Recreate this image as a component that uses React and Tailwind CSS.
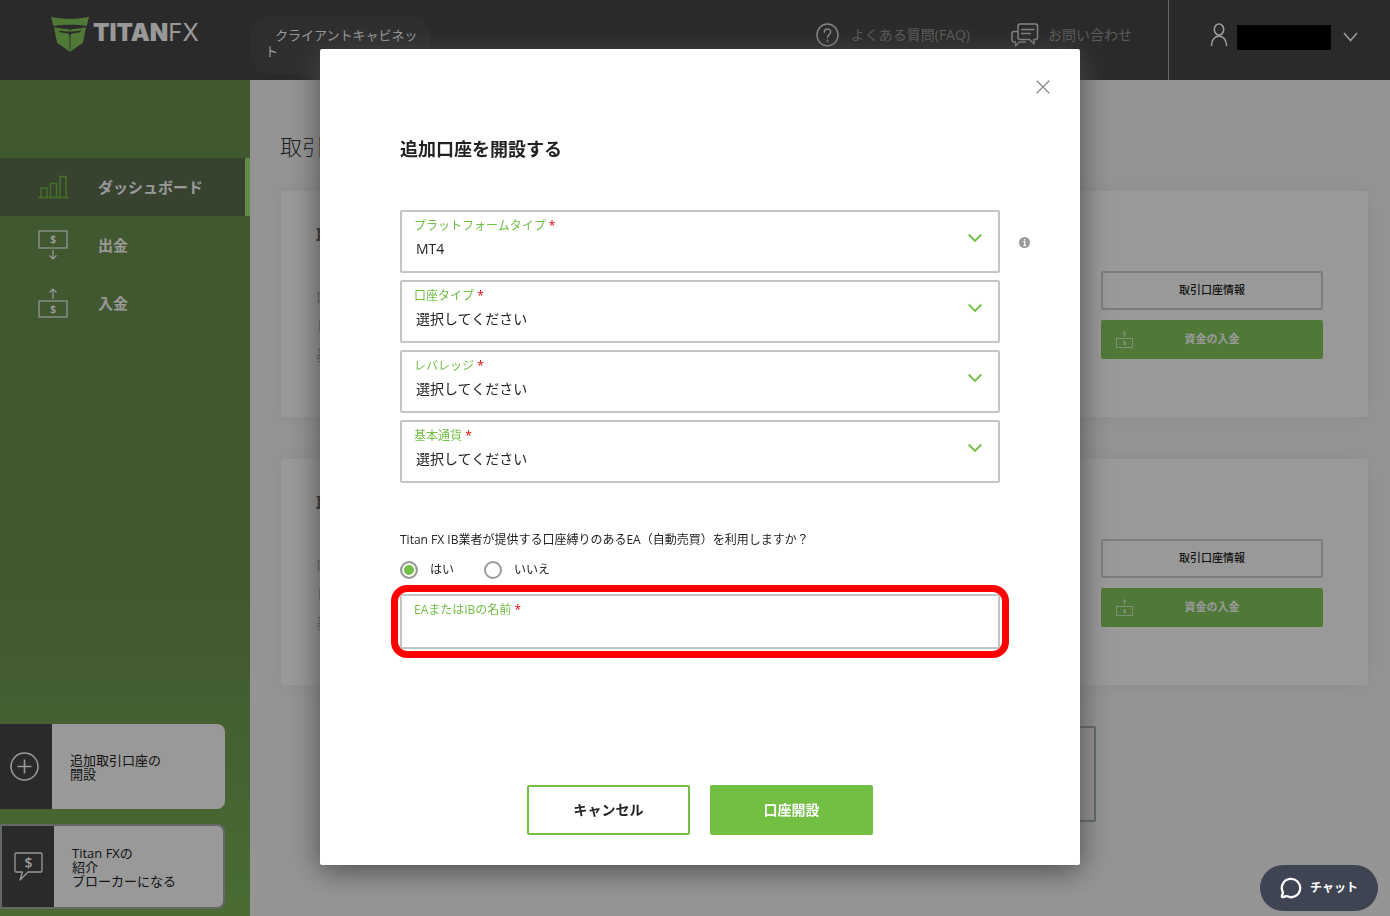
import { useState } from 'react';
import { MessageCircle, X } from 'lucide-react';

const NAV_ITEMS = [
  { label: 'ダッシュボード', icon: ChartIcon, active: true },
  { label: '出金', icon: WithdrawIcon },
  { label: '入金', icon: DepositIcon },
];

const FIELDS = [
  { id: 'platform', label: 'プラットフォームタイプ', options: ['MT4', 'MT5'], info: true },
  { id: 'account', label: '口座タイプ', options: ['選択してください'] },
  { id: 'leverage', label: 'レバレッジ', options: ['選択してください'] },
  { id: 'currency', label: '基本通貨', options: ['選択してください'] },
];

function ShieldLogo() {
  return (
    <svg width="38" height="36" viewBox="0 0 38 36" fill="#85c85d" aria-hidden="true" className="shrink-0">
      <path d="M0 .7c12 2.800 26 2.800 38 0l-2.300 9.300c-10-1.600-23.400-1.600-33.400 0z" />
      <path d="M3 11.300c4 .9 9 1.500 13.500 1.700l2.500 1 2.500-1c4.500-.2 9.500-.8 13.500-1.700L32 26.700 19 35.700 6 26.700z" />
      <path d="M8 14.500c4 .6 7 1 11 1s7-.4 11-1l-1 1.800-8 1.200c-1 0-1.300 1-1.500 3L19.300 34h-.6l-.2-13.500c-.2-2-.5-3-1.500-3l-8-1.200z" fill="#464646" />
    </svg>
  );
}

function ChartIcon() {
  return (
    <svg width="31" height="24" viewBox="0 0 31 24" fill="none" stroke="#72bf44" strokeWidth="1.4">
      <path d="M0 22.500h31M3 22.500V13h6v9.500M12.500 22.500V8.500h6v14M22 22.500V1.500h6v21" />
    </svg>
  );
}

function WithdrawIcon() {
  return (
    <svg width="30" height="30" viewBox="0 0 30 30" fill="none" stroke="#fff" strokeWidth="1.2">
      <rect x="1" y="1" width="28" height="17" />
      <text x="15" y="13" textAnchor="middle" fontSize="10" fill="#fff" stroke="none">$</text>
      <path d="M15 20v9M11.500 25.500L15 29l3.500-3.500" />
    </svg>
  );
}

function DepositIcon({ size = 30 }) {
  return (
    <svg width={size} height={size} viewBox="0 0 30 30" fill="none" stroke="#fff" strokeWidth="1.2">
      <path d="M15 11V1M11.500 4.500L15 1l3.500 3.500" />
      <rect x="1" y="13" width="28" height="16" />
      <text x="15" y="24.500" textAnchor="middle" fontSize="10" fill="#fff" stroke="none">$</text>
    </svg>
  );
}

function QuestionIcon() {
  return (
    <svg width="23" height="24" viewBox="0 0 23 24" fill="none" stroke="#ddd" strokeWidth="1.5">
      <ellipse cx="11.500" cy="12" rx="10.500" ry="11" />
      <path d="M8.300 9.300c0-4.300 6.400-4.300 6.400-.3 0 2.600-3.200 2.600-3.200 5.600M11.500 17v1.500" strokeLinecap="round" />
    </svg>
  );
}

function TalkIcon() {
  return (
    <svg width="30" height="24" viewBox="0 0 30 24" fill="none" stroke="#ddd" strokeWidth="1.5" strokeLinejoin="round">
      <path d="M10 1h15.500q2 0 2 2v11.500q0 2-2 2h-1.500v4.500l-4.500-4.500H10q-2 0-2-2V3q0-2 2-2z" />
      <path d="M8 8.500H4q-2 0-2 2V17q0 2 2 2h1.500v4l4-4H16" />
      <path d="M11.500 6.500H24M11.500 10.500h9" strokeLinecap="round" />
    </svg>
  );
}

function UserIcon() {
  return (
    <svg width="18" height="24" viewBox="0 0 18 24" fill="none" stroke="#fff" strokeWidth="1.6" strokeLinecap="round">
      <ellipse cx="9" cy="6.500" rx="4.700" ry="5.500" />
      <path d="M1.500 22.500c0-12.500 15-12.500 15 0" />
    </svg>
  );
}

function PlusIcon() {
  return (
    <svg width="29" height="29" viewBox="0 0 29 29" fill="none" stroke="#fff" strokeWidth="1.6">
      <circle cx="14.500" cy="14.500" r="13.500" />
      <path d="M14.500 7.500v14M7.500 14.500h14" />
    </svg>
  );
}

function BrokerIcon() {
  return (
    <svg width="29" height="29" viewBox="0 0 29 29" fill="none" stroke="#fff" strokeWidth="1.3" strokeLinejoin="round">
      <path d="M2 1h25q1 0 1 1v17q0 1-1 1H14l-8 8 2.500-8H2q-1 0-1-1V2q0-1 1-1z" />
      <text x="14.500" y="15.500" textAnchor="middle" fontSize="14" fontWeight="600" fill="#fff" stroke="none">$</text>
    </svg>
  );
}

function Header() {
  return (
    <header className="flex h-20 bg-[#464646] text-white">
      <a href="#" aria-label="TITAN FX" className="flex w-[250px] gap-1 pt-4 pl-[51px]">
        <ShieldLogo />
        <span className="flex h-[34px] items-center font-['Inter',sans-serif] text-2xl">
          <span className="font-black">TITAN</span>
          <span>FX</span>
        </span>
      </a>
      <p className="mt-[15px] h-[59px] w-[180px] rounded-[20px] bg-[#4d4d4d] py-3 pl-[15px] indent-[10px] text-[13px] leading-4">
        クライアントキャビネット
      </p>
      <nav className="ml-auto flex h-[70px] items-center gap-10 pr-9 text-sm text-[#999]">
        <a href="#faq" className="flex items-center gap-3">
          <QuestionIcon />
          よくある質問(FAQ)
        </a>
        <a href="#contact" className="flex items-center gap-2">
          <TalkIcon />
          お問い合わせ
        </a>
      </nav>
      <button aria-label="アカウント" className="flex w-[222px] items-start border-l border-[#aaa] pt-[23px] pl-[41px]">
        <UserIcon />
        <span className="mt-0.5 ml-[9px] h-[25px] w-[94px] bg-black" />
        <svg className="mt-[9px] ml-3" width="15" height="10" viewBox="0 0 15 10" fill="none" stroke="#fff" strokeWidth="1.6">
          <path d="M1 1l6.500 7.500L14 1" />
        </svg>
      </button>
    </header>
  );
}

function Sidebar() {
  return (
    <aside className="flex w-[250px] shrink-0 flex-col justify-between bg-linear-to-b from-[#6b9350] from-60% to-[#7db355] pt-[78px] pb-[7px]">
      <nav className="text-[15px] font-bold text-white">
        {NAV_ITEMS.map(({ label, icon: Icon, active }) => (
          <a
            key={label}
            href="#"
            className={
              active
                ? 'flex h-[58px] items-center border-r-[5px] border-[#a0e878] bg-[#5c704e] pl-[38px]'
                : 'flex h-[58px] items-center pl-[38px]'
            }
          >
            <span className="w-[60px]">
              <Icon />
            </span>
            {label}
          </a>
        ))}
      </nav>
      <div className="flex w-[225px] flex-col gap-[15px] text-[13px] leading-[14px] text-[#222]">
        <button className="flex h-[85px] overflow-hidden rounded-r-lg bg-white text-left">
          <span className="flex h-full w-[52px] items-center justify-center bg-[#464646] pr-1">
            <PlusIcon />
          </span>
          <span className="self-center pl-[18px]">
            追加取引口座の
            <br />
            開設
          </span>
        </button>
        <button className="flex h-[85px] overflow-hidden rounded-r-lg border-2 border-[#a5afb3] bg-white text-left">
          <span className="flex h-full w-[52px] items-center justify-center bg-[#464646]">
            <BrokerIcon />
          </span>
          <span className="self-center pl-[18px]">
            Titan FXの
            <br />
            紹介
            <br />
            ブローカーになる
          </span>
        </button>
      </div>
    </aside>
  );
}

function AccountCard() {
  return (
    <section className="flex justify-between rounded-xs border border-[#f0f0f0] bg-white pt-8 pr-[45px] pb-12 pl-[35px] shadow-[0_0_20px_rgba(0,0,0,0.06)]">
      <div>
        <h3 className="text-base font-bold text-[#333]">取引口座</h3>
        <ul className="mt-[35px] text-sm leading-[29px] text-[#999]">
          <li>口座タイプ</li>
          <li>レバレッジ</li>
          <li>基本通貨</li>
        </ul>
      </div>
      <div className="flex w-[222px] flex-col gap-2.5 pt-12 text-[11px]">
        <button className="h-[39px] shrink-0 rounded-xs border-2 border-[#cfcfcf] font-medium text-[#222]">
          取引口座情報
        </button>
        <button className="relative h-[39px] shrink-0 rounded-xs bg-[#85c85d] font-bold text-white">
          <span className="absolute top-[11px] left-[15px]">
            <DepositIcon size={17} />
          </span>
          資金の入金
        </button>
      </div>
    </section>
  );
}

function SelectField({ id, label, options, info }) {
  return (
    <div className="relative flex h-[63px] flex-col rounded-xs border-2 border-[#c5c5c5]">
      <label htmlFor={id} className="px-3 pt-1.5 text-xs leading-4 text-[#72bf44]">
        {label} <span className="text-[#e00]">*</span>
      </label>
      <select id={id} className="h-[30px] appearance-none bg-transparent px-3.5 text-sm text-[#222] outline-none">
        {options.map((o) => (
          <option key={o}>{o}</option>
        ))}
      </select>
      <svg
        className="pointer-events-none absolute top-[21px] right-4"
        width="14"
        height="10"
        viewBox="0 0 14 10"
        fill="none"
        stroke="#72bf44"
        strokeWidth="1.8"
      >
        <path d="M.7 1.500L7 8l6.300-6.500" />
      </svg>
      {info && (
        <svg className="absolute top-[25px] left-full ml-[21px]" width="11" height="11" viewBox="0 0 11 11">
          <circle cx="5.500" cy="5.500" r="5.500" fill="#999" />
          <path d="M4.300 4.700h1.500v3.500M4.200 8.500h2.900M5.500 2v1.500" stroke="#fff" strokeWidth="1.200" fill="none" />
        </svg>
      )}
    </div>
  );
}

function RadioOption({ label, checked, onChange }) {
  return (
    <label className="flex items-center gap-3">
      <input
        type="radio"
        name="ea"
        checked={checked}
        onChange={onChange}
        className="size-[18px] appearance-none rounded-full border-2 border-[#999] bg-white checked:bg-[#72bf44] checked:shadow-[inset_0_0_0_2px_#fff]"
      />
      {label}
    </label>
  );
}

function OpenAccountModal() {
  const [usesEa, setUsesEa] = useState(true);

  return (
    <div className="fixed inset-0 flex items-start justify-center overflow-y-auto bg-black/40 pt-[49px] pl-2.5">
      <form
        role="dialog"
        aria-labelledby="modal-title"
        className="relative w-full max-w-[760px] rounded-xs bg-white px-20 pt-[88px] pb-[30px] text-[#222] shadow-[0_5px_30px_#4a4a4a]"
      >
        <button type="button" aria-label="閉じる" className="absolute top-[26px] right-[25px] text-[#888]">
          <X size={24} strokeWidth={1.3} />
        </button>
        <h2 id="modal-title" className="text-lg leading-6 font-bold">追加口座を開設する</h2>

        <div className="mt-[49px] flex flex-col gap-[7px]">
          {FIELDS.map((f) => (
            <SelectField key={f.id} {...f} />
          ))}
        </div>

        <fieldset className="mt-[47px] text-xs leading-5">
          <legend>Titan FX IB業者が提供する口座縛りのあるEA（自動売買）を利用しますか？</legend>
          <div className="mt-2.5 flex gap-[30px]">
            <RadioOption label="はい" checked={usesEa} onChange={() => setUsesEa(true)} />
            <RadioOption label="いいえ" checked={!usesEa} onChange={() => setUsesEa(false)} />
          </div>
        </fieldset>

        <div className="relative mt-3.5 flex h-[55px] flex-col rounded-xs border-2 border-[#c5c5c5]">
          <label htmlFor="ea-name" className="px-3 pt-1.5 text-xs leading-4 text-[#72bf44]">
            EAまたはIBの名前 <span className="text-[#e00]">*</span>
          </label>
          <input id="ea-name" type="text" className="h-7 px-3.5 text-sm outline-none" />
          <span className="pointer-events-none absolute -inset-[11px] rounded-2xl border-[7px] border-[#f00]" />
        </div>

        <div className="mt-[136px] flex justify-center gap-5 text-sm font-bold">
          <button type="button" className="h-[50px] w-[163px] rounded-xs border-2 border-[#72bf44]">
            キャンセル
          </button>
          <button type="submit" className="h-[50px] w-[163px] rounded-xs bg-[#72bf44] text-white">
            口座開設
          </button>
        </div>
      </form>
    </div>
  );
}

export default function App() {
  return (
    <div className="flex min-h-screen flex-col bg-[#f7f7f7] font-['Open_Sans','Noto_Sans_CJK_JP',sans-serif]">
      <Header />
      <div className="flex grow">
        <Sidebar />
        <main className="grow pt-[50px] pr-[21px] pl-[30px]">
          <h1 className="text-[22px] leading-8 font-light text-[#333]">取引口座</h1>
          <div className="mt-7 flex flex-col gap-10">
            <AccountCard />
            <AccountCard />
          </div>
          <button className="mx-auto mt-10 block h-24 w-[542px] rounded-xs border-2 border-[#9fafab] text-sm">
            追加取引口座の開設
          </button>
        </main>
      </div>

      <OpenAccountModal />

      <button className="fixed right-3 bottom-[5px] flex h-[46px] w-[118px] items-center justify-center gap-2 rounded-full bg-[#3f4452] text-xs font-bold text-white">
        <MessageCircle size={22} strokeWidth={2.5} />
        チャット
      </button>
    </div>
  );
}
